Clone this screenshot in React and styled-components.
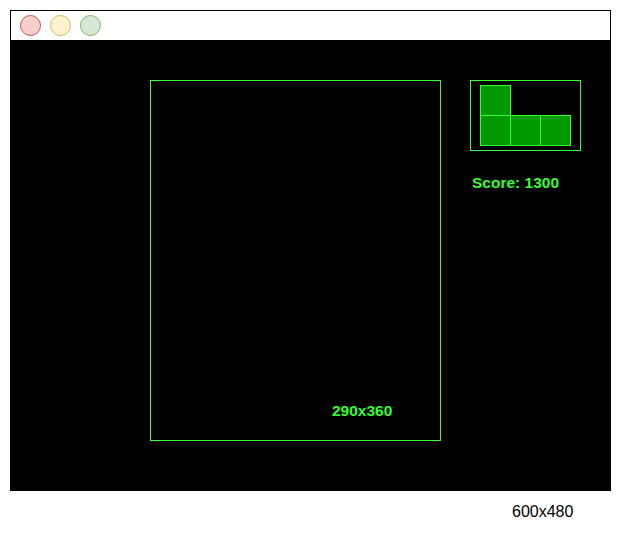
import React from 'react'
import styled, { createGlobalStyle } from 'styled-components'

const GlobalStyle = createGlobalStyle`
  * { box-sizing: border-box; }
  body {
    margin: 0;
    background: #fff;
    font-family: "Liberation Sans", Arial, Helvetica, sans-serif;
  }
`;

const dots = [
  { fill: '#f8cecc', stroke: '#b85450' },
  { fill: '#fff2cc', stroke: '#d6b656' },
  { fill: '#d5e8d4', stroke: '#82b366' },
];

const Piece = () => (
  <svg width="91" height="61" viewBox="0 0 91 61">
    {[
      [0, 0],
      [0, 30],
      [30, 30],
      [60, 30],
    ].map(([x, y]) => (
      <rect key={`${x}-${y}`} x={x + 0.5} y={y + 0.5} width="30" height="30" fill="#009900" stroke="#33ff33" strokeWidth="1" />
    ))}
  </svg>
);

const App = () => {
  return (
    <Page>
      <GlobalStyle />
      <Window>
        <TitleBar>
          {dots.map((d) => (
            <Dot key={d.fill} fill={d.fill} stroke={d.stroke} />
          ))}
        </TitleBar>
        <Screen>
          <Board>
            <SizeLabel>290x360</SizeLabel>
          </Board>
          <SidePanel>
            <Preview>
              <Piece />
            </Preview>
            <Score>Score: 1300</Score>
          </SidePanel>
        </Screen>
      </Window>
      <Caption>600x480</Caption>
    </Page>
  )
}

export default App

const Page = styled.div`
  padding: 10px;
  display: flex;
  flex-direction: column;
`;

const Window = styled.div`
  width: 601px;
  display: flex;
  flex-direction: column;
`;

const TitleBar = styled.div`
  height: 30px;
  border: 1px solid #000;
  border-bottom: none;
  background: #fff;
  display: flex;
  align-items: center;
  padding-left: 9px;
  gap: 9px;
`;

const Dot = styled.div`
  width: 21px;
  height: 21px;
  border-radius: 50%;
  background: ${(p) => p.fill};
  border: 1px solid ${(p) => p.stroke};
`;

const Screen = styled.div`
  height: 451px;
  background: #000;
  display: flex;
  align-items: flex-start;
  padding: 40px 0 0 140px;
  gap: 29px;
`;

const Board = styled.div`
  width: 291px;
  height: 361px;
  border: 1px solid #33ff33;
  display: flex;
  flex-direction: column;
  justify-content: flex-end;
  padding: 0 0 20px 181px;
`;

const SizeLabel = styled.div`
  font-size: 15.5px;
  line-height: 18px;
  font-weight: bold;
  color: #33ff33;
`;

const SidePanel = styled.div`
  display: flex;
  flex-direction: column;
  align-items: flex-start;
`;

const Preview = styled.div`
  width: 111px;
  height: 71px;
  border: 1px solid #33ff33;
  padding: 4px 0 0 9px;
  display: flex;
  align-items: flex-start;

  svg { display: block; }
`;

const Score = styled.div`
  margin: 23px 0 0 2px;
  font-size: 15.5px;
  line-height: 18px;
  font-weight: bold;
  color: #33ff33;
`;

const Caption = styled.div`
  margin: 12px 0 0 502px;
  font-size: 16px;
  line-height: 18px;
  color: #000;
`;
